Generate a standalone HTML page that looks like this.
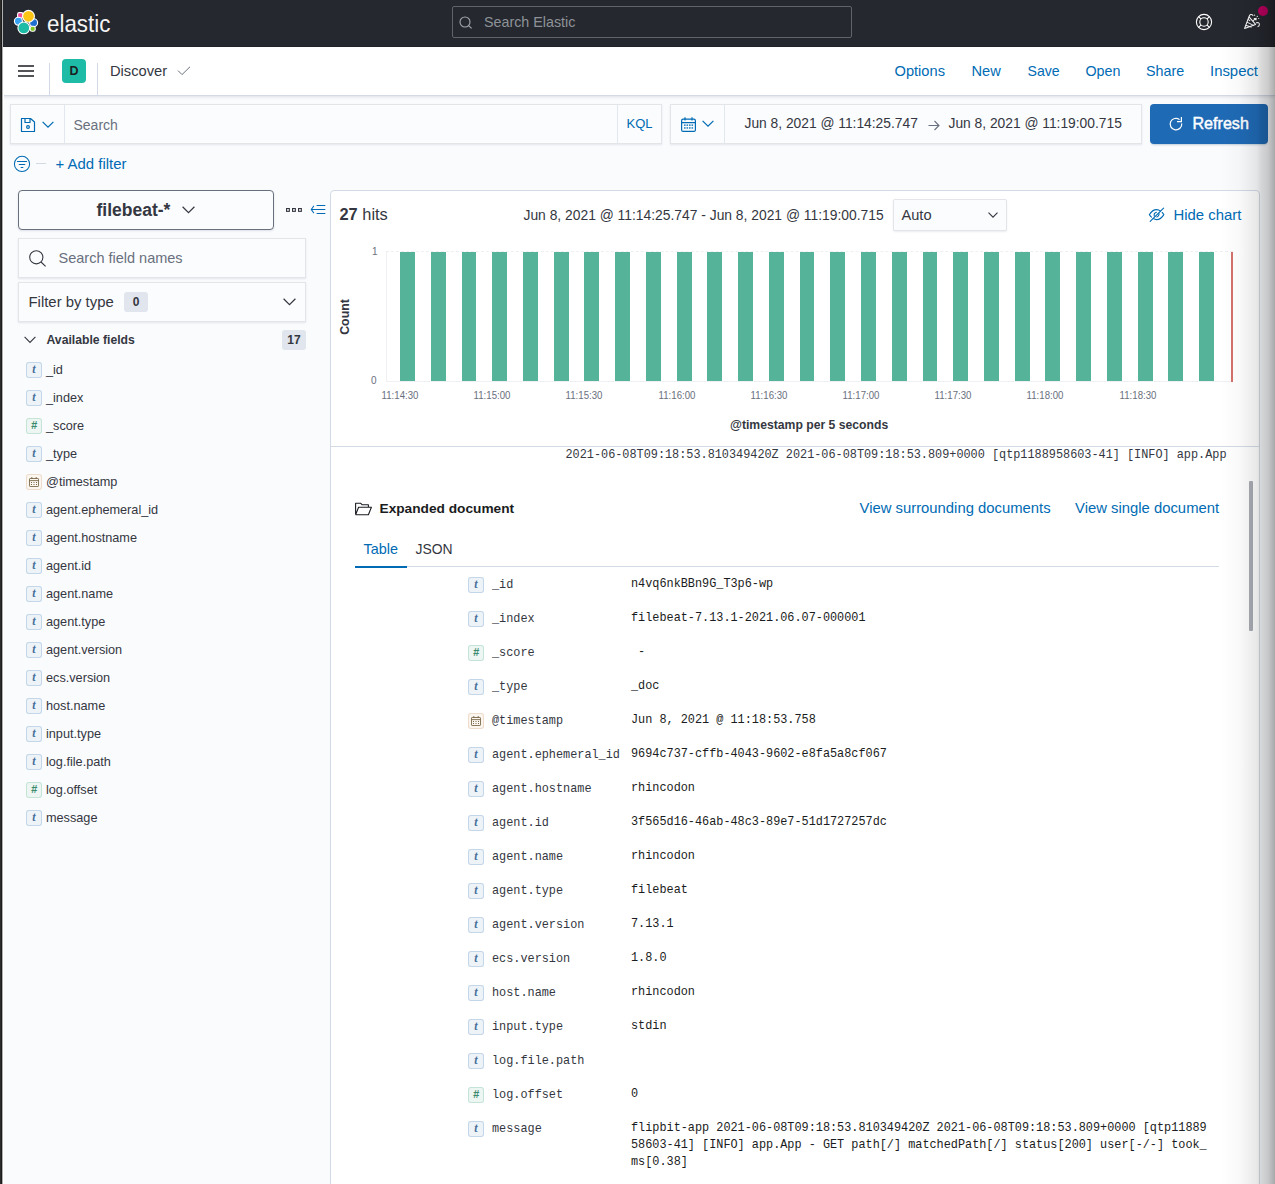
<!DOCTYPE html>
<html><head><meta charset="utf-8">
<style>
*{box-sizing:border-box;margin:0;padding:0}
html,body{width:1275px;height:1184px;overflow:hidden;background:#fafbfd;font-family:"Liberation Sans",sans-serif;color:#343741;position:relative}
.a{position:absolute}
.t{position:absolute;white-space:nowrap;line-height:20px;height:20px}
.mono{font-family:"Liberation Mono",monospace;font-size:11.85px}
.lnk{color:#006bb4}
svg{position:absolute;overflow:visible}
.tok{position:absolute;width:16px;height:16px;border-radius:3px;font-family:"Liberation Serif",serif;font-style:italic;font-weight:bold;font-size:12px;line-height:15px;text-align:center}
.ts{background:#eef3f8;box-shadow:inset 0 0 0 1px #c4d6ea;color:#47709a}
.tn{background:#edf6f2;box-shadow:inset 0 0 0 1px #c5e4d8;color:#3b8a6e;font-family:"Liberation Sans",sans-serif;font-size:11px;font-style:italic}
.td{background:#fbf6f0;box-shadow:inset 0 0 0 1px #eddccb}
.fn{font-size:12.7px;color:#343741}
.dk{color:#343741}
.dv{color:#1a1c21;margin-top:-1px}

</style></head><body>

<!-- left dark edge -->
<div class="a" style="left:0;top:0;width:1px;height:1184px;background:#2c2c2c;z-index:60"></div>
<div class="a" style="left:1px;top:0;width:1px;height:1184px;background:#1c1c1c;z-index:60"></div>
<div class="a" style="left:2px;top:0;width:1px;height:1184px;background:#b0b0b0;z-index:60"></div>
<div class="a" style="left:3px;top:95px;width:1px;height:1089px;background:#fff;z-index:60"></div>

<!-- ===== HEADER ===== -->
<div class="a" style="left:0;top:0;width:1275px;height:47px;background:#25282f;border-bottom:1px solid #1a1c22"></div>
<svg style="left:14px;top:10px" width="24" height="24" viewBox="0 0 24 24">
  <g stroke="#fff" stroke-width="1.1">
    <rect x="3.6" y="2.6" width="5.4" height="5.4" rx="1.6" fill="#f04e98"/>
    <circle cx="4.4" cy="11.3" r="4" fill="#36a2ef"/>
    <circle cx="19.6" cy="12.7" r="4" fill="#1f6fd1"/>
    <rect x="16.2" y="16.2" width="5" height="5" rx="1.8" fill="#7ec51f" />
    <circle cx="14.5" cy="6.3" r="5.9" fill="#fec514"/>
    <circle cx="9.8" cy="17.9" r="5.9" fill="#1ebca6"/>
  </g>
</svg>
<div class="t" style="left:46.5px;top:10.5px;font-size:24.2px;line-height:26px;height:26px;color:#f4f4f5;transform:scaleX(.925);transform-origin:0 0">elastic</div>
<div class="a" style="left:452px;top:6px;width:400px;height:32px;border:1px solid #5f636b;border-radius:2px;background:#25282f"></div>
<svg style="left:459px;top:16px" width="14" height="13" viewBox="0 0 14 13">
  <circle cx="6" cy="6" r="5" fill="none" stroke="#a5a9ae" stroke-width="1.1"/>
  <path d="M9.6 9.6 L12.6 12.4" stroke="#a5a9ae" stroke-width="1.1"/>
</svg>
<div class="t" style="left:484px;top:12px;font-size:14.3px;color:#8e9298">Search Elastic</div>
<!-- help lifebuoy -->
<svg style="left:1195px;top:13px" width="18" height="18" viewBox="0 0 18 18">
  <circle cx="9" cy="9" r="7.6" fill="none" stroke="#fff" stroke-width="1.1"/>
  <circle cx="9" cy="9" r="4.2" fill="none" stroke="#fff" stroke-width="1.1"/>
  <path d="M3.6 3.6 L6.1 6.1 M14.4 3.6 L11.9 6.1 M3.6 14.4 L6.1 11.9 M14.4 14.4 L11.9 11.9" stroke="#fff" stroke-width="1.1"/>
</svg>
<!-- cheer icon -->
<svg style="left:1243px;top:13px" width="18" height="17" viewBox="0 0 18 17">
  <g fill="none" stroke="#fff" stroke-width="1.05" stroke-linejoin="round" stroke-linecap="round">
    <path d="M1.6 15.4 L6 3.8 L12.6 11.4 Z"/>
    <path d="M3.2 12.6 L8.2 14 M4.4 9.4 L10.6 12.4 M5.4 6.6 L6.8 7.6"/>
    <path d="M6.2 3.4 C6.6 1.4 8.6 0.8 10 2.4"/>
    <path d="M13.4 9.8 C14.8 9.4 16.4 9.8 16.4 11.2 C16.4 12.6 15.6 13.4 15 13.6"/>
    <path d="M10.2 7.6 L13.2 5.2 M11.2 5.4 L13.2 5.2 L13 7"/>
  </g>
  <g fill="#fff"><circle cx="11.6" cy="2.2" r=".6"/><circle cx="14.3" cy="3.4" r=".6"/><circle cx="15.7" cy="5.5" r=".6"/></g>
</svg>
<div class="a" style="left:1258px;top:6px;width:10px;height:10px;border-radius:50%;background:#c00061"></div>

<!-- ===== NAV2 ===== -->
<div class="a" style="left:0;top:47px;width:1275px;height:49px;background:#fff;border-bottom:1px solid #d3dae6;box-shadow:0 1px 3px rgba(152,162,179,.3)"></div>
<svg style="left:18px;top:60px" width="16" height="20" viewBox="0 0 16 20"><path d="M0 6 H16 M0 11 H16 M0 16 H16" stroke="#1a1c21" stroke-width="1.5"/></svg>
<div class="a" style="left:49px;top:63px;width:1px;height:32px;background:#d3dae6"></div>
<div class="a" style="left:97px;top:63px;width:1px;height:32px;background:#d3dae6"></div>
<div class="a" style="left:62px;top:59px;width:24px;height:24px;border-radius:4px;background:#1ebca6;color:#1a1c21;font-size:12.5px;font-weight:bold;line-height:24px;text-align:center">D</div>
<div class="t" style="left:110px;top:61px;font-size:14.7px;color:#343741">Discover</div>
<svg style="left:177px;top:66px" width="14" height="10" viewBox="0 0 14 10"><path d="M1 4.6 L5 8.6 L13 0.8" fill="none" stroke="#69707d" stroke-width="1"/></svg>
<div class="t lnk" style="left:894.5px;top:61px;font-size:14.65px">Options</div>
<div class="t lnk" style="left:971.5px;top:61px;font-size:14.65px">New</div>
<div class="t lnk" style="left:1027.5px;top:61px;font-size:14.1px">Save</div>
<div class="t lnk" style="left:1085.5px;top:61px;font-size:14.3px">Open</div>
<div class="t lnk" style="left:1146px;top:61px;font-size:14.3px">Share</div>
<div class="t lnk" style="left:1210px;top:61px;font-size:14.9px">Inspect</div>

<!-- ===== QUERY BAR ===== -->
<div class="a" style="left:10px;top:104px;width:652px;height:40px;background:#fbfcfd;box-shadow:inset 0 0 0 1px rgba(15,34,58,.1),0 1px 2px rgba(152,162,179,.25)"></div>
<div class="a" style="left:64px;top:105px;width:1px;height:38px;background:#e3e8f0"></div>
<div class="a" style="left:617px;top:105px;width:1px;height:38px;background:#e3e8f0"></div>
<svg style="left:20px;top:117px" width="16" height="16" viewBox="0 0 16 16"><path d="M1.5 1.5 H10.5 L14.5 5 V14.5 H1.5 Z M5 1.5 V5.5 H10 V1.5" fill="none" stroke="#006bb4" stroke-width="1.2" stroke-linejoin="round"/><circle cx="8" cy="10" r="1.4" fill="none" stroke="#006bb4" stroke-width="1.2"/></svg>
<svg style="left:42px;top:121px" width="12" height="8" viewBox="0 0 12 8"><path d="M0.6 0.8 L6 6.2 L11.4 0.8" fill="none" stroke="#006bb4" stroke-width="1.2"/></svg>
<div class="t" style="left:73.5px;top:115px;font-size:14px;color:#69707d">Search</div>
<div class="t lnk" style="left:626.5px;top:114px;font-size:13px">KQL</div>

<div class="a" style="left:670px;top:104px;width:472px;height:40px;background:#fbfcfd;box-shadow:inset 0 0 0 1px rgba(15,34,58,.1),0 1px 2px rgba(152,162,179,.25)"></div>
<div class="a" style="left:724px;top:105px;width:1px;height:38px;background:#e3e8f0"></div>
<svg style="left:681px;top:117px" width="15" height="15" viewBox="0 0 15 15"><g fill="none" stroke="#006bb4" stroke-width="1.2"><rect x="0.6" y="2.2" width="13.8" height="12.2" rx="1.5"/><path d="M0.6 5.6 H14.4 M4 0.3 V3.6 M11 0.3 V3.6"/></g><g fill="#006bb4"><rect x="3" y="7.5" width="1.6" height="1.3"/><rect x="5.5" y="7.5" width="1.6" height="1.3"/><rect x="8" y="7.5" width="1.6" height="1.3"/><rect x="10.5" y="7.5" width="1.6" height="1.3"/><rect x="3" y="10.3" width="1.6" height="1.3"/><rect x="5.5" y="10.3" width="1.6" height="1.3"/><rect x="8" y="10.3" width="1.6" height="1.3"/><rect x="10.5" y="10.3" width="1.6" height="1.3"/></g></svg>
<svg style="left:702px;top:120px" width="12" height="8" viewBox="0 0 12 8"><path d="M0.6 0.8 L6 6.2 L11.4 0.8" fill="none" stroke="#006bb4" stroke-width="1.2"/></svg>
<div class="t" style="left:744.5px;top:114px;font-size:13.8px;color:#343741">Jun 8, 2021 @ 11:14:25.747</div>
<svg style="left:928px;top:120px" width="12" height="11" viewBox="0 0 12 11"><path d="M0.5 5.5 H11 M6.5 1 L11 5.5 L6.5 10" fill="none" stroke="#69707d" stroke-width="1.1"/></svg>
<div class="t" style="left:948.5px;top:114px;font-size:13.8px;color:#343741">Jun 8, 2021 @ 11:19:00.715</div>

<div class="a" style="left:1150px;top:104px;width:118px;height:40px;background:#1f6ab5;border-radius:4px;box-shadow:0 2px 2px -1px rgba(54,97,126,.3)"></div>
<svg style="left:1169px;top:116px" width="14" height="15" viewBox="0 0 14 15"><path d="M10.6 3.6 A5.8 5.8 0 1 0 12.7 7.4" fill="none" stroke="#fff" stroke-width="1.2"/><path d="M12.4 0.9 V5.6 H8" fill="none" stroke="#fff" stroke-width="1.2"/></svg>
<div class="t" style="left:1192.5px;top:113px;font-size:16.1px;color:#fff;-webkit-text-stroke:.45px #fff">Refresh</div>

<!-- ===== FILTER ROW ===== -->
<svg style="left:13px;top:155px" width="18" height="18" viewBox="0 0 18 18"><circle cx="9" cy="8.9" r="7.6" fill="none" stroke="#006bb4" stroke-width="1.05"/><path d="M4.4 6.5 H13.6 M6.2 9.5 H11.8 M8.1 12.5 H9.9" stroke="#006bb4" stroke-width="1.05" stroke-linecap="round"/></svg>
<div class="a" style="left:36px;top:163px;width:10px;height:1px;background:#d3dae6"></div>
<div class="t lnk" style="left:55.5px;top:154px;font-size:14.95px">+ Add filter</div>

<!-- ===== SIDEBAR ===== -->
<div class="a" style="left:18px;top:190px;width:256px;height:40px;border:1px solid #69707d;border-radius:4px;background:#fbfcfd;box-shadow:0 1px 2px rgba(152,162,179,.3)"></div>
<div class="t" style="left:96.5px;top:199px;font-size:17.5px;line-height:22px;height:22px;font-weight:bold;color:#343741">filebeat-*</div>
<svg style="left:182px;top:206px" width="13" height="8" viewBox="0 0 13 8"><path d="M0.6 0.8 L6.5 6.6 L12.4 0.8" fill="none" stroke="#343741" stroke-width="1.2"/></svg>
<svg style="left:286px;top:208px" width="17" height="5" viewBox="0 0 17 5"><g fill="none" stroke="#343741" stroke-width="1.1"><rect x="0.55" y="0.55" width="2.8" height="2.8"/><rect x="6.55" y="0.55" width="2.8" height="2.8"/><rect x="12.55" y="0.55" width="2.8" height="2.8"/></g></svg>
<svg style="left:311px;top:204px" width="15" height="11" viewBox="0 0 15 11"><g fill="none" stroke="#006bb4" stroke-width="1.1" stroke-linecap="round"><path d="M2.6 2.2 L0.3 5.5 L2.6 8.7 M0.3 5.5 H13.9 M6 1.45 H13.9 M6 9.5 H13.9"/></g></svg>

<div class="a" style="left:18px;top:238px;width:288px;height:40px;background:#fbfcfd;box-shadow:inset 0 0 0 1px rgba(15,34,58,.1),0 1px 2px rgba(152,162,179,.25)"></div>
<svg style="left:29px;top:250px" width="18" height="17" viewBox="0 0 18 17"><circle cx="7.3" cy="7.3" r="6.6" fill="none" stroke="#343741" stroke-width="1.1"/><path d="M12 12 L16.6 16.4" stroke="#343741" stroke-width="1.1"/></svg>
<div class="t" style="left:58.5px;top:248px;font-size:14.5px;color:#69707d">Search field names</div>

<div class="a" style="left:18px;top:282px;width:288px;height:40px;background:#fbfcfd;box-shadow:inset 0 0 0 1px rgba(15,34,58,.1),0 1px 2px rgba(152,162,179,.25)"></div>
<div class="t" style="left:28.5px;top:292px;font-size:14.9px;color:#343741">Filter by type</div>
<div class="a" style="left:124px;top:292px;width:24px;height:20px;border-radius:3px;background:#e0e5ee;font-size:12px;font-weight:bold;line-height:20px;text-align:center;color:#343741">0</div>
<svg style="left:283px;top:298px" width="13" height="8" viewBox="0 0 13 8"><path d="M0.6 0.8 L6.5 6.6 L12.4 0.8" fill="none" stroke="#343741" stroke-width="1.2"/></svg>

<svg style="left:24px;top:336px" width="12" height="8" viewBox="0 0 12 8"><path d="M0.6 0.8 L6 6.4 L11.4 0.8" fill="none" stroke="#343741" stroke-width="1.1"/></svg>
<div class="t" style="left:46.5px;top:330px;font-size:12.2px;font-weight:bold;color:#343741">Available fields</div>
<div class="a" style="left:282px;top:330px;width:24px;height:20px;border-radius:3px;background:#e0e5ee;font-size:12px;font-weight:bold;line-height:20px;text-align:center;color:#343741">17</div>

<div id="fields"></div>
<div class="tok ts" style="left:26px;top:362px">t</div>
<div class="t fn" style="left:46px;top:360px">_id</div>
<div class="tok ts" style="left:26px;top:390px">t</div>
<div class="t fn" style="left:46px;top:388px">_index</div>
<div class="tok tn" style="left:26px;top:418px">#</div>
<div class="t fn" style="left:46px;top:416px">_score</div>
<div class="tok ts" style="left:26px;top:446px">t</div>
<div class="t fn" style="left:46px;top:444px">_type</div>
<div class="tok td" style="left:26px;top:474px"><svg style="left:2.5px;top:2.5px" width="10" height="10" viewBox="0 0 10 10"><g fill="none" stroke="#7b6a4b" stroke-width="0.9"><rect x="0.5" y="1.5" width="9" height="8" rx=".6"/><path d="M0.5 3.6 H9.5 M2.8 0 V2 M7.2 0 V2"/></g><g fill="#7b6a4b"><rect x="2" y="5" width="1" height="1"/><rect x="4.5" y="5" width="1" height="1"/><rect x="7" y="5" width="1" height="1"/><rect x="2" y="7" width="1" height="1"/><rect x="4.5" y="7" width="1" height="1"/><rect x="7" y="7" width="1" height="1"/></g></svg></div>
<div class="t fn" style="left:46px;top:472px">@timestamp</div>
<div class="tok ts" style="left:26px;top:502px">t</div>
<div class="t fn" style="left:46px;top:500px">agent.ephemeral_id</div>
<div class="tok ts" style="left:26px;top:530px">t</div>
<div class="t fn" style="left:46px;top:528px">agent.hostname</div>
<div class="tok ts" style="left:26px;top:558px">t</div>
<div class="t fn" style="left:46px;top:556px">agent.id</div>
<div class="tok ts" style="left:26px;top:586px">t</div>
<div class="t fn" style="left:46px;top:584px">agent.name</div>
<div class="tok ts" style="left:26px;top:614px">t</div>
<div class="t fn" style="left:46px;top:612px">agent.type</div>
<div class="tok ts" style="left:26px;top:642px">t</div>
<div class="t fn" style="left:46px;top:640px">agent.version</div>
<div class="tok ts" style="left:26px;top:670px">t</div>
<div class="t fn" style="left:46px;top:668px">ecs.version</div>
<div class="tok ts" style="left:26px;top:698px">t</div>
<div class="t fn" style="left:46px;top:696px">host.name</div>
<div class="tok ts" style="left:26px;top:726px">t</div>
<div class="t fn" style="left:46px;top:724px">input.type</div>
<div class="tok ts" style="left:26px;top:754px">t</div>
<div class="t fn" style="left:46px;top:752px">log.file.path</div>
<div class="tok tn" style="left:26px;top:782px">#</div>
<div class="t fn" style="left:46px;top:780px">log.offset</div>
<div class="tok ts" style="left:26px;top:810px">t</div>
<div class="t fn" style="left:46px;top:808px">message</div>
<!-- /fields -->

<!-- ===== MAIN PANEL ===== -->
<div class="a" style="left:330px;top:190px;width:930px;height:1000px;background:#fff;border:1px solid #d3dae6;border-radius:4px"></div>
<div class="t" style="left:339.5px;top:203px;font-size:16.4px;line-height:22px;height:22px;color:#343741"><b>27</b> hits</div>
<div class="t" style="left:523.5px;top:205px;font-size:13.85px;color:#343741">Jun 8, 2021 @ 11:14:25.747 - Jun 8, 2021 @ 11:19:00.715</div>
<div class="a" style="left:893px;top:199px;width:114px;height:32px;background:#fbfcfd;box-shadow:inset 0 0 0 1px rgba(15,34,58,.1),0 1px 2px rgba(152,162,179,.2);border-radius:2px"></div>
<div class="t" style="left:901.5px;top:205px;font-size:14.6px;color:#343741">Auto</div>
<svg style="left:988px;top:212px" width="10" height="6" viewBox="0 0 10 6"><path d="M0.5 0.6 L5 5.2 L9.5 0.6" fill="none" stroke="#343741" stroke-width="1.1"/></svg>
<svg style="left:1148px;top:207px" width="18" height="15" viewBox="0 0 18 15"><g fill="none" stroke="#006bb4" stroke-width="1.1" stroke-linecap="round"><path d="M12.6 4.2 C11.4 3.2 10 2.6 8.6 2.6 C5.8 2.6 3.2 4.6 1.4 7.6 C2 8.6 2.7 9.5 3.5 10.2"/><path d="M5.2 11.6 C6.3 12.2 7.4 12.6 8.6 12.6 C11.4 12.6 14 10.6 15.8 7.6 C15.3 6.8 14.8 6.1 14.2 5.5"/><path d="M6.3 9.2 C5.9 7.6 6.6 5.8 8.4 5.3 M10.9 6.2 C11.3 7.9 10.5 9.6 8.8 10"/><path d="M15.6 1.2 L2.2 14.4"/></g></svg>
<div class="t lnk" style="left:1173.5px;top:205px;font-size:14.9px">Hide chart</div>

<!-- chart -->
<div class="a" style="left:386px;top:251px;width:1px;height:131px;background:#eef0f3"></div>
<div class="a" style="left:386px;top:381px;width:847px;height:1px;background:#eef0f3"></div>
<div class="a" style="left:386px;top:251px;width:847px;height:0;border-top:1px dashed #eef0f3"></div>
<div id="bars"></div>
<div class="a" style="left:400.10px;top:252px;width:14.9px;height:129px;background:#54b399"></div>
<div class="a" style="left:430.83px;top:252px;width:14.9px;height:129px;background:#54b399"></div>
<div class="a" style="left:461.56px;top:252px;width:14.9px;height:129px;background:#54b399"></div>
<div class="a" style="left:492.29px;top:252px;width:14.9px;height:129px;background:#54b399"></div>
<div class="a" style="left:523.02px;top:252px;width:14.9px;height:129px;background:#54b399"></div>
<div class="a" style="left:553.75px;top:252px;width:14.9px;height:129px;background:#54b399"></div>
<div class="a" style="left:584.48px;top:252px;width:14.9px;height:129px;background:#54b399"></div>
<div class="a" style="left:615.21px;top:252px;width:14.9px;height:129px;background:#54b399"></div>
<div class="a" style="left:645.94px;top:252px;width:14.9px;height:129px;background:#54b399"></div>
<div class="a" style="left:676.67px;top:252px;width:14.9px;height:129px;background:#54b399"></div>
<div class="a" style="left:707.40px;top:252px;width:14.9px;height:129px;background:#54b399"></div>
<div class="a" style="left:738.13px;top:252px;width:14.9px;height:129px;background:#54b399"></div>
<div class="a" style="left:768.86px;top:252px;width:14.9px;height:129px;background:#54b399"></div>
<div class="a" style="left:799.59px;top:252px;width:14.9px;height:129px;background:#54b399"></div>
<div class="a" style="left:830.32px;top:252px;width:14.9px;height:129px;background:#54b399"></div>
<div class="a" style="left:861.05px;top:252px;width:14.9px;height:129px;background:#54b399"></div>
<div class="a" style="left:891.78px;top:252px;width:14.9px;height:129px;background:#54b399"></div>
<div class="a" style="left:922.51px;top:252px;width:14.9px;height:129px;background:#54b399"></div>
<div class="a" style="left:953.24px;top:252px;width:14.9px;height:129px;background:#54b399"></div>
<div class="a" style="left:983.97px;top:252px;width:14.9px;height:129px;background:#54b399"></div>
<div class="a" style="left:1014.70px;top:252px;width:14.9px;height:129px;background:#54b399"></div>
<div class="a" style="left:1045.43px;top:252px;width:14.9px;height:129px;background:#54b399"></div>
<div class="a" style="left:1076.16px;top:252px;width:14.9px;height:129px;background:#54b399"></div>
<div class="a" style="left:1106.89px;top:252px;width:14.9px;height:129px;background:#54b399"></div>
<div class="a" style="left:1137.62px;top:252px;width:14.9px;height:129px;background:#54b399"></div>
<div class="a" style="left:1168.35px;top:252px;width:14.9px;height:129px;background:#54b399"></div>
<div class="a" style="left:1199.08px;top:252px;width:14.9px;height:129px;background:#54b399"></div>
<!-- /bars -->
<div class="a" style="left:1230.5px;top:252px;width:2px;height:130px;background:#d4716b"></div>
<div class="t" style="left:372px;top:241.8px;font-size:10px;color:#69707d">1</div>
<div class="t" style="left:371px;top:371px;font-size:10px;color:#69707d">0</div>
<div class="t" style="left:317px;top:306.5px;width:56px;text-align:center;transform:rotate(-90deg);font-size:12.3px;font-weight:bold;color:#343741">Count</div>
<div id="ticks"></div>
<div class="t" style="left:369.90px;top:384.7px;width:60px;text-align:center;font-size:10.6px;transform:scaleX(.91);color:#69707d">11:14:30</div>
<div class="t" style="left:462.10px;top:384.7px;width:60px;text-align:center;font-size:10.6px;transform:scaleX(.91);color:#69707d">11:15:00</div>
<div class="t" style="left:554.30px;top:384.7px;width:60px;text-align:center;font-size:10.6px;transform:scaleX(.91);color:#69707d">11:15:30</div>
<div class="t" style="left:646.50px;top:384.7px;width:60px;text-align:center;font-size:10.6px;transform:scaleX(.91);color:#69707d">11:16:00</div>
<div class="t" style="left:738.70px;top:384.7px;width:60px;text-align:center;font-size:10.6px;transform:scaleX(.91);color:#69707d">11:16:30</div>
<div class="t" style="left:830.90px;top:384.7px;width:60px;text-align:center;font-size:10.6px;transform:scaleX(.91);color:#69707d">11:17:00</div>
<div class="t" style="left:923.10px;top:384.7px;width:60px;text-align:center;font-size:10.6px;transform:scaleX(.91);color:#69707d">11:17:30</div>
<div class="t" style="left:1015.30px;top:384.7px;width:60px;text-align:center;font-size:10.6px;transform:scaleX(.91);color:#69707d">11:18:00</div>
<div class="t" style="left:1107.50px;top:384.7px;width:60px;text-align:center;font-size:10.6px;transform:scaleX(.91);color:#69707d">11:18:30</div>
<!-- /ticks -->
<div class="t" style="left:730px;top:415px;font-size:12.2px;font-weight:bold;color:#343741">@timestamp per 5 seconds</div>
<div class="a" style="left:331px;top:446px;width:928px;height:1px;background:#d3dae6"></div>
<div class="t mono" style="left:565.5px;top:445px;color:#343741">2021-06-08T09:18:53.810349420Z 2021-06-08T09:18:53.809+0000 [qtp1188958603-41] [INFO] app.App</div>

<!-- expanded document -->
<svg style="left:355px;top:502px" width="17" height="14" viewBox="0 0 17 14"><path d="M0.6 12.8 V1.2 H5.6 L7.2 2.8 H13.4 V5.2 M0.6 12.8 H13.4 L16.4 5.2 H3.6 L0.6 12.8" fill="none" stroke="#1a1c21" stroke-width="1.1" stroke-linejoin="round"/></svg>
<div class="t" style="left:379.5px;top:499px;font-size:13.7px;font-weight:bold;color:#1a1c21">Expanded document</div>
<div class="t lnk" style="left:859.5px;top:498px;font-size:14.85px">View surrounding documents</div>
<div class="t lnk" style="left:1075px;top:498px;font-size:14.85px">View single document</div>
<div class="t lnk" style="left:363.5px;top:539px;font-size:14.4px">Table</div>
<div class="t" style="left:415.5px;top:539px;font-size:13.9px;color:#343741">JSON</div>
<div class="a" style="left:355px;top:566px;width:864px;height:1px;background:#d3dae6"></div>
<div class="a" style="left:355px;top:566px;width:52px;height:2px;background:#006bb4"></div>
<div id="doc"></div>
<div class="tok ts" style="left:468px;top:577px">t</div>
<div class="t mono dk" style="left:492px;top:575px">_id</div>
<div class="t mono dv" style="left:631px;top:575px;white-space:pre">n4vq6nkBBn9G_T3p6-wp</div>
<div class="tok ts" style="left:468px;top:611px">t</div>
<div class="t mono dk" style="left:492px;top:609px">_index</div>
<div class="t mono dv" style="left:631px;top:609px;white-space:pre">filebeat-7.13.1-2021.06.07-000001</div>
<div class="tok tn" style="left:468px;top:645px">#</div>
<div class="t mono dk" style="left:492px;top:643px">_score</div>
<div class="t mono dv" style="left:631px;top:643px;white-space:pre"> -</div>
<div class="tok ts" style="left:468px;top:679px">t</div>
<div class="t mono dk" style="left:492px;top:677px">_type</div>
<div class="t mono dv" style="left:631px;top:677px;white-space:pre">_doc</div>
<div class="tok td" style="left:468px;top:713px"><svg style="left:2.5px;top:2.5px" width="10" height="10" viewBox="0 0 10 10"><g fill="none" stroke="#7b6a4b" stroke-width="0.9"><rect x="0.5" y="1.5" width="9" height="8" rx=".6"/><path d="M0.5 3.6 H9.5 M2.8 0 V2 M7.2 0 V2"/></g><g fill="#7b6a4b"><rect x="2" y="5" width="1" height="1"/><rect x="4.5" y="5" width="1" height="1"/><rect x="7" y="5" width="1" height="1"/><rect x="2" y="7" width="1" height="1"/><rect x="4.5" y="7" width="1" height="1"/><rect x="7" y="7" width="1" height="1"/></g></svg></div>
<div class="t mono dk" style="left:492px;top:711px">@timestamp</div>
<div class="t mono dv" style="left:631px;top:711px;white-space:pre">Jun 8, 2021 @ 11:18:53.758</div>
<div class="tok ts" style="left:468px;top:747px">t</div>
<div class="t mono dk" style="left:492px;top:745px">agent.ephemeral_id</div>
<div class="t mono dv" style="left:631px;top:745px;white-space:pre">9694c737-cffb-4043-9602-e8fa5a8cf067</div>
<div class="tok ts" style="left:468px;top:781px">t</div>
<div class="t mono dk" style="left:492px;top:779px">agent.hostname</div>
<div class="t mono dv" style="left:631px;top:779px;white-space:pre">rhincodon</div>
<div class="tok ts" style="left:468px;top:815px">t</div>
<div class="t mono dk" style="left:492px;top:813px">agent.id</div>
<div class="t mono dv" style="left:631px;top:813px;white-space:pre">3f565d16-46ab-48c3-89e7-51d1727257dc</div>
<div class="tok ts" style="left:468px;top:849px">t</div>
<div class="t mono dk" style="left:492px;top:847px">agent.name</div>
<div class="t mono dv" style="left:631px;top:847px;white-space:pre">rhincodon</div>
<div class="tok ts" style="left:468px;top:883px">t</div>
<div class="t mono dk" style="left:492px;top:881px">agent.type</div>
<div class="t mono dv" style="left:631px;top:881px;white-space:pre">filebeat</div>
<div class="tok ts" style="left:468px;top:917px">t</div>
<div class="t mono dk" style="left:492px;top:915px">agent.version</div>
<div class="t mono dv" style="left:631px;top:915px;white-space:pre">7.13.1</div>
<div class="tok ts" style="left:468px;top:951px">t</div>
<div class="t mono dk" style="left:492px;top:949px">ecs.version</div>
<div class="t mono dv" style="left:631px;top:949px;white-space:pre">1.8.0</div>
<div class="tok ts" style="left:468px;top:985px">t</div>
<div class="t mono dk" style="left:492px;top:983px">host.name</div>
<div class="t mono dv" style="left:631px;top:983px;white-space:pre">rhincodon</div>
<div class="tok ts" style="left:468px;top:1019px">t</div>
<div class="t mono dk" style="left:492px;top:1017px">input.type</div>
<div class="t mono dv" style="left:631px;top:1017px;white-space:pre">stdin</div>
<div class="tok ts" style="left:468px;top:1053px">t</div>
<div class="t mono dk" style="left:492px;top:1051px">log.file.path</div>
<div class="tok tn" style="left:468px;top:1087px">#</div>
<div class="t mono dk" style="left:492px;top:1085px">log.offset</div>
<div class="t mono dv" style="left:631px;top:1085px;white-space:pre">0</div>
<div class="tok ts" style="left:468px;top:1121px">t</div>
<div class="t mono dk" style="left:492px;top:1119px">message</div>
<div class="a mono dv" style="left:631px;top:1121px;width:590px;line-height:17px;white-space:pre">flipbit-app 2021-06-08T09:18:53.810349420Z 2021-06-08T09:18:53.809+0000 [qtp11889
58603-41] [INFO] app.App - GET path[/] matchedPath[/] status[200] user[-/-] took_
ms[0.38]</div>
<!-- /doc -->
<!-- scrollbar -->
<div class="a" style="left:1249px;top:481px;width:4px;height:150px;background:#a9acb3;border-radius:1px"></div>

<!-- right window shadow -->
<div class="a" style="left:1220px;top:0;width:55px;height:1184px;z-index:50;background:linear-gradient(to right,rgba(0,0,0,0) 0,rgba(0,0,0,.025) 36%,rgba(0,0,0,.09) 67%,rgba(0,0,0,.15) 75%,rgba(0,0,0,.20) 87%,rgba(0,0,0,.33) 100%)"></div>
</body></html>
